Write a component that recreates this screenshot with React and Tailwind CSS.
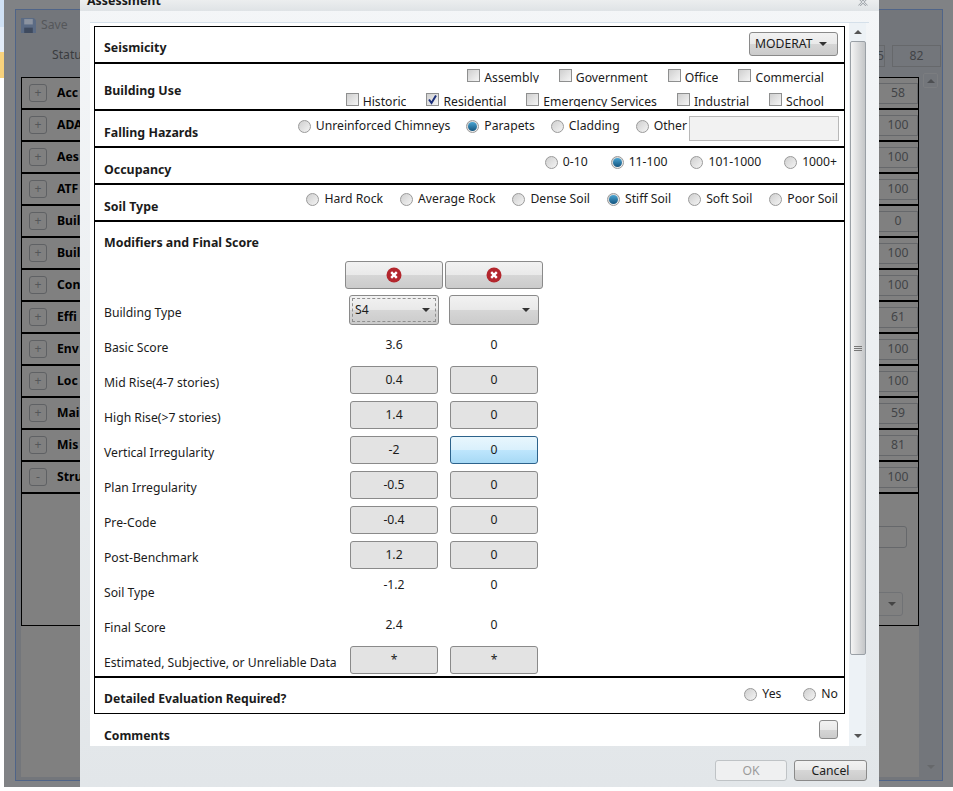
import React from "react";

const listRows = [
    ["Acc", "58"], ["ADA", "100"], ["Aes", "100"], ["ATF", "100"], ["Buil", "0"], ["Buil", "100"], ["Con", "100"],
    ["Effi", "61"], ["Env", "100"], ["Loc", "100"], ["Mai", "59"], ["Mis", "81"], ["Stru", "100"],
];

const scoreRows = [
    ["Basic Score", "3.6", "0", false],
    ["Mid Rise(4-7 stories)", "0.4", "0", true],
    ["High Rise(>7 stories)", "1.4", "0", true],
    ["Vertical Irregularity", "-2", "0", true],
    ["Plan Irregularity", "-0.5", "0", true],
    ["Pre-Code", "-0.4", "0", true],
    ["Post-Benchmark", "1.2", "0", true],
    ["Soil Type", "-1.2", "0", false],
    ["Final Score", "2.4", "0", false],
    ["Estimated, Subjective, or Unreliable Data", "*", "*", true],
];

const gloss = "bg-[linear-gradient(#f2f2f2,#e9e9e9_50%,#d6d6d6_50%,#cbcbcb)]";

function Radio({ label, checked }) {
    return (
        <span className="flex items-center gap-[5px] whitespace-nowrap">
            <span className="flex h-[13px] w-[13px] items-center justify-center rounded-full border border-[#9a9a9a] bg-gradient-to-br from-[#cfcfcf] to-[#f4f4f4]">
                {checked && <span className="h-[9px] w-[9px] rounded-full bg-gradient-to-b from-[#4aa6d4] to-[#14557f]" />}
            </span>
            <span>{label}</span>
        </span>
    );
}

function Check({ label, checked }) {
    return (
        <span className="flex items-start gap-1 whitespace-nowrap">
            <span className="relative h-[13px] w-[13px] border border-[#8e8f8f] bg-gradient-to-br from-[#cfcfcf] to-[#f5f5f5]">
                {checked && (
                    <svg viewBox="0 0 13 13" className="absolute -left-px -top-px h-[13px] w-[13px]">
                        <path d="M3 6.5 L5.5 10 L10 2.5" fill="none" stroke="#1c2f7a" strokeWidth="2" />
                    </svg>
                )}
            </span>
            <span className="block h-[14px] overflow-hidden leading-[17px]">{label}</span>
        </span>
    );
}

function Arrow({ color = "#333", up }) {
    return (
        <svg viewBox="0 0 8 4" className="h-1 w-2">
            <path d={up ? "M0 4 H8 L4 0 Z" : "M0 0 H8 L4 4 Z"} fill={color} />
        </svg>
    );
}

function CloseButton() {
    return (
        <div className={`flex h-[28px] w-[98px] items-center justify-center rounded-[3px] border border-[#8a8a8a] ${gloss}`}>
            <svg viewBox="0 0 16 16" className="h-4 w-4">
                <circle cx="8" cy="8" r="7.5" fill="#b3262d" />
                <path d="M5.2 5.2 L10.8 10.8 M10.8 5.2 L5.2 10.8" stroke="#fff" strokeWidth="2.4" />
            </svg>
        </div>
    );
}

function ScoreValue({ value, button, active, raised }) {
    if (!button) {
        return <div className={`w-[100px] text-center ${raised ? "pt-px" : "pt-[6px]"}`}>{value}</div>;
    }
    return (
        <div className="flex w-[100px] justify-center pt-px">
            <div
                className={`flex h-[28px] w-[88px] items-center justify-center rounded-[3px] border ${
                    active ? "border-[#2c628b] bg-[linear-gradient(#e8f6fd,#d9f0fc_50%,#bee6fd_50%,#a7d9f5)]" : "border-[#8a8a8a] bg-[#e3e3e3]"
                }`}
            >
                {value}
            </div>
        </div>
    );
}

function Section({ title, children, className = "h-[37px]", titleClass = "pt-[13px]" }) {
    return (
        <div className={`flex shrink-0 border-b-2 border-black pl-[9px] ${className}`}>
            <div className={`w-[180px] shrink-0 text-[12.4px] font-bold ${titleClass}`}>{title}</div>
            {children}
        </div>
    );
}

export default function App() {
    return (
        <div className="relative flex h-[791px] w-[953px] overflow-hidden bg-white font-['Noto_Sans',sans-serif] text-[12.2px] text-[#1b1b1b]">
            {/* edge of the window behind */}
            <div className="flex h-[78px] w-1 shrink-0 flex-col">
                <div className="h-[27px] bg-[#cfe0f3]" />
                <div className="h-[25px] bg-[#e3ecf7]" />
                <div className="h-[26px] bg-[#f8d27c]" />
            </div>
            {/* page behind the dialog */}
            <div className="h-[787px] w-[949px] bg-[#808285] pl-[11px] pr-[10px] pt-[9px]">
                <div className="h-[772px] border border-[#4f6488] bg-[#73767b] pl-[5px]">
                    <div className="flex h-[67px] flex-col text-[#3a3c3f]">
                        <div className="flex h-[30px] items-center gap-[5px]">
                            <svg viewBox="0 0 14 14" className="h-[15px] w-[15px]">
                                <path d="M0 0 H12 L14 2 V14 H0 Z" fill="#5b6b84" />
                                <rect x="3" y="1" width="8" height="5" fill="#8b93a0" />
                                <rect x="3" y="9" width="8" height="5" fill="#3e4a5e" />
                            </svg>
                            <span className="text-[#55575a]">Save</span>
                            <span className="ml-[10px] h-[10px] w-[10px] rounded-full bg-[#8a6a6a]" />
                        </div>
                        <div className="flex items-start justify-between pr-px pt-[5px]">
                            <span className="pl-[31px] pt-px">Statu</span>
                            <div className="flex gap-[7px]">
                                <div className="w-[30px] border border-[#66686b] py-px text-right text-[#424447]">5</div>
                                <div className="w-[49px] border border-[#66686b] py-px text-center text-[#424447]">82</div>
                            </div>
                        </div>
                    </div>
                    <div className="flex h-[700px] bg-[#808080]">
                        <div className="h-[549px] w-[898px] shrink-0 border border-black">
                            {listRows.map(([label, value], i) => (
                                <div key={i} className="flex h-[32px] items-center justify-between border-b-2 border-black pl-[7px] text-[#222] last:border-b-0">
                                    <div className="flex items-center gap-[10px]">
                                        <span className="flex h-[18px] w-[18px] items-center justify-center rounded-[3px] border border-[#5f6164] text-[#55575a]">{label === "Stru" ? "-" : "+"}</span>
                                        <span className="font-bold text-black">{label}</span>
                                    </div>
                                    <span className="flex h-[21px] w-[40px] items-center justify-center border border-[#66686b] text-[#424447]">{value}</span>
                                </div>
                            ))}
                            <div className="ml-auto mr-[11px] mt-[32px] h-[22px] w-[40px] rounded-[3px] border border-[#66686b]" />
                            <div className="ml-auto mr-[15px] mt-[44px] flex h-[24px] w-[36px] items-center justify-end rounded-[3px] border border-[#707275] pr-[6px]">
                                <Arrow color="#444" />
                            </div>
                        </div>
                        <div className="flex w-[23px] flex-col items-center bg-[#73767b] pb-[3px]">
                            <div className="mt-[-4px] flex h-[15px] w-[15px] items-center justify-center rounded-[2px] border border-[#7b7d80]">
                                <Arrow color="#4d4f52" up />
                            </div>
                            <div className="mt-auto flex h-[15px] items-center">
                                <Arrow color="#66686b" />
                            </div>
                        </div>
                    </div>
                </div>
            </div>

            {/* dialog */}
            <div className="absolute left-[80px] top-0 flex h-[787px] w-[799px] flex-col bg-gradient-to-b from-[#f4f6f8] to-[#e2e6e9]">
                <div className="flex h-[11px] items-center justify-between bg-gradient-to-b from-[#eceeef] to-[#dfe3e6] pl-[7px] pr-[11px]">
                    <span className="-mt-2 whitespace-nowrap text-[12.4px] font-bold">Assessment</span>
                    <svg viewBox="0 0 10 8" className="-mt-[7px] h-2 w-[10px]">
                        <path d="M1 0 L9 8 M9 0 L1 8" stroke="#a4a9ae" strokeWidth="2.4" />
                        <path d="M1 0 L9 8 M9 0 L1 8" stroke="#eef0f2" strokeWidth="0.8" />
                    </svg>
                </div>
                <div className="px-[10px] pt-[11px]">
                    <div className="flex h-[724px] border-t border-[#d5e0ea]">
                        <div className="w-[759px] overflow-hidden bg-white pl-1 pt-[3px]">
                            <div className="w-[751px]">
                                <div className="flex flex-col border border-black">
                                    <Section title="Seismicity" className="h-[37px]" titleClass="pt-[12px]">
                                        <div className="flex flex-1 justify-end pr-[6px] pt-[5px]">
                                            <div className={`flex h-[24px] w-[89px] items-center justify-between rounded-[3px] border border-[#8a8a8a] pl-[5px] pr-[10px] ${gloss}`}>
                                                <span className="pt-px">MODERAT</span>
                                                <Arrow />
                                            </div>
                                        </div>
                                    </Section>
                                    <Section title="Building Use" className="h-[47px]" titleClass="pt-[18px]">
                                        <div className="flex flex-1 flex-col">
                                            <div className="flex justify-end gap-5 pr-5 pt-[5px]">
                                                <Check label="Assembly" />
                                                <Check label="Government" />
                                                <Check label="Office" />
                                                <Check label="Commercial" />
                                            </div>
                                            <div className="flex justify-end gap-5 pr-5 pt-[10px]">
                                                <Check label="Historic" />
                                                <Check label="Residential" checked />
                                                <Check label="Emergency Services" />
                                                <Check label="Industrial" />
                                                <Check label="School" />
                                            </div>
                                        </div>
                                    </Section>
                                    <Section title="Falling Hazards">
                                        <div className="flex flex-1 items-start justify-end gap-4 pr-[5px] pt-[6px]">
                                            <Radio label="Unreinforced Chimneys" />
                                            <Radio label="Parapets" checked />
                                            <Radio label="Cladding" />
                                            <div className="flex items-start gap-[2px]">
                                                <Radio label="Other" />
                                                <div className="-mt-px h-[25px] w-[150px] border border-[#b8b8b8] bg-[#f2f2f2]" />
                                            </div>
                                        </div>
                                    </Section>
                                    <Section title="Occupancy">
                                        <div className="flex flex-1 items-start justify-end gap-[23px] pr-[7px] pt-[5px]">
                                            <Radio label="0-10" />
                                            <Radio label="11-100" checked />
                                            <Radio label="101-1000" />
                                            <Radio label="1000+" />
                                        </div>
                                    </Section>
                                    <Section title="Soil Type">
                                        <div className="flex flex-1 items-start justify-end gap-[17px] pr-[6px] pt-[5px]">
                                            <Radio label="Hard Rock" />
                                            <Radio label="Average Rock" />
                                            <Radio label="Dense Soil" />
                                            <Radio label="Stiff Soil" checked />
                                            <Radio label="Soft Soil" />
                                            <Radio label="Poor Soil" />
                                        </div>
                                    </Section>
                                    <div className="h-[456px] shrink-0 overflow-hidden border-b-2 border-black pl-[9px]">
                                        <div className="h-[39px] whitespace-nowrap pt-[12px] text-[12.4px] font-bold">Modifiers and Final Score</div>
                                        <div className="flex gap-[2px] pl-[241px]">
                                            <CloseButton />
                                            <CloseButton />
                                        </div>
                                        <div className="mt-[6px] flex h-[35px]">
                                            <div className="w-[240px] pt-[9px]">Building Type</div>
                                            <div className="flex w-[100px] justify-center">
                                                <div className={`relative flex h-[30px] w-[90px] items-center justify-between rounded-[3px] border border-[#8a8a8a] pl-[5px] pr-2 ${gloss}`}>
                                                    <span className="absolute inset-[2px] border border-dashed border-[#8f8f8f]" />
                                                    <span className="pt-px">S4</span>
                                                    <Arrow />
                                                </div>
                                            </div>
                                            <div className="flex w-[100px] justify-center">
                                                <div className={`flex h-[30px] w-[90px] items-center justify-end rounded-[3px] border border-[#8a8a8a] pr-2 ${gloss}`}>
                                                    <Arrow />
                                                </div>
                                            </div>
                                        </div>
                                        {scoreRows.map(([label, a, b, button]) => (
                                            <div key={label} className="flex h-[35px]">
                                                <div className="w-[240px] whitespace-nowrap pt-[9px]">{label}</div>
                                                <ScoreValue value={a} button={button} raised={label === "Soil Type"} />
                                                <ScoreValue value={b} button={button} raised={label === "Soil Type"} active={label === "Vertical Irregularity"} />
                                            </div>
                                        ))}
                                    </div>
                                    <div className="flex h-[35px] shrink-0 pl-[9px]">
                                        <div className="flex-1 pt-[12px] text-[12.2px] font-bold">Detailed Evaluation Required?</div>
                                        <div className="flex items-start gap-[22px] pr-[6px] pt-[7px]">
                                            <Radio label="Yes" />
                                            <Radio label="No" />
                                        </div>
                                    </div>
                                </div>
                                <div className="flex justify-between pl-[10px] pr-[7px]">
                                    <div className="pt-[13px] text-[12.2px] font-bold">Comments</div>
                                    <div className={`mt-[6px] h-[19px] w-[19px] rounded-[3px] border border-[#8a8a8a] ${gloss}`} />
                                </div>
                            </div>
                        </div>
                        {/* scrollbar */}
                        <div className="flex w-[17px] flex-col items-center bg-[#edf2f6]">
                            <div className="flex h-[18px] items-center">
                                <Arrow color="#555" up />
                            </div>
                            <div className="flex h-[614px] w-[16px] flex-col items-center justify-center gap-px rounded-[2px] border border-[#9aa0a6] bg-gradient-to-r from-[#f4f4f4] to-[#c4c6c8]">
                                <span className="h-px w-2 bg-[#777]" />
                                <span className="h-px w-2 bg-[#777]" />
                                <span className="h-px w-2 bg-[#777]" />
                            </div>
                            <div className="flex flex-1 items-end pb-2">
                                <Arrow color="#555" />
                            </div>
                        </div>
                    </div>
                </div>
                <div className="flex flex-1 justify-end gap-[7px] pr-[12px] pt-[14px]">
                    <div className="flex h-[21px] w-[72px] items-center justify-center rounded-[3px] border border-[#bfc3c6] bg-[#eff0f1] pt-px text-[#9b9b9b]">OK</div>
                    <div className={`flex h-[21px] w-[73px] items-center justify-center rounded-[3px] border border-[#8a8a8a] pt-px ${gloss}`}>Cancel</div>
                </div>
            </div>
        </div>
    );
}
